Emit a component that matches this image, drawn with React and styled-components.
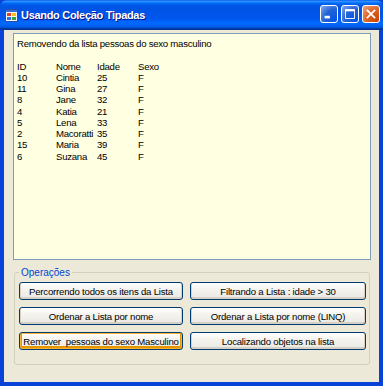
import React from "react";
import styled, { createGlobalStyle } from "styled-components";

const GlobalStyle = createGlobalStyle`
  html, body {
    margin: 0;
    padding: 0;
    background: #ffffff;
  }
  body {
    font-family: "Liberation Sans", Arial, sans-serif;
  }
`;

// pessoas que sobraram depois de remover o sexo masculino
const pessoas = [
  { id: 10, nome: "Cintia", idade: 25, sexo: "F" },
  { id: 11, nome: "Gina", idade: 27, sexo: "F" },
  { id: 8, nome: "Jane", idade: 32, sexo: "F" },
  { id: 4, nome: "Katia", idade: 21, sexo: "F" },
  { id: 5, nome: "Lena", idade: 33, sexo: "F" },
  { id: 2, nome: "Macoratti", idade: 35, sexo: "F" },
  { id: 15, nome: "Maria", idade: 39, sexo: "F" },
  { id: 6, nome: "Suzana", idade: 45, sexo: "F" },
];

const botoes = [
  ["Percorrendo todos os itens da Lista", "Filtrando a Lista : idade > 30"],
  ["Ordenar a Lista por nome", "Ordenar a Lista por nome (LINQ)"],
  ["Remover  pessoas do sexo Masculino", "Localizando objetos na lista"],
];

const FormIcon = () => (
  <svg width="13" height="13" viewBox="0 0 13 13">
    <rect x="0.5" y="0.5" width="12" height="12" fill="#f4f4f4" stroke="#2a4ea8" />
    <rect x="1" y="1" width="11" height="2" fill="#3a6cd8" />
    <rect x="2" y="4" width="4" height="3" fill="#e04030" />
    <rect x="7" y="4" width="4" height="3" fill="#f0c020" />
    <rect x="2" y="8" width="4" height="3" fill="#3070e0" />
    <rect x="7" y="8" width="4" height="3" fill="#40a040" />
  </svg>
);

const App = () => {
  return (
    <>
      <GlobalStyle />
      <Window>
        <TitleBar>
          <FormIcon />
          <Title>Usando Coleção Tipadas</Title>
          <Controls>
            <CaptionButton>
              <svg width="18" height="18" viewBox="0 0 18 18">
                <rect x="4" y="11" width="6" height="3" fill="#fff" />
              </svg>
            </CaptionButton>
            <CaptionButton>
              <svg width="18" height="18" viewBox="0 0 18 18">
                <rect x="4" y="4" width="10" height="10" fill="none" stroke="#fff" strokeWidth="1" />
                <rect x="4" y="4" width="10" height="2" fill="#fff" />
              </svg>
            </CaptionButton>
            <CaptionButton close>
              <svg width="18" height="18" viewBox="0 0 18 18">
                <path d="M5 5 L13 13 M13 5 L5 13" stroke="#fff" strokeWidth="2" strokeLinecap="square" />
              </svg>
            </CaptionButton>
          </Controls>
        </TitleBar>
        <Client>
          <OutputBox>
            <Line>Removendo da lista pessoas do sexo masculino</Line>
            <Line>&nbsp;</Line>
            <Row>
              <Cell>ID</Cell>
              <Cell>Nome</Cell>
              <Cell>Idade</Cell>
              <Cell>Sexo</Cell>
            </Row>
            {pessoas.map((p) => (
              <Row key={p.id}>
                <Cell>{p.id}</Cell>
                <Cell>{p.nome}</Cell>
                <Cell>{p.idade}</Cell>
                <Cell>{p.sexo}</Cell>
              </Row>
            ))}
          </OutputBox>
          <Group>
            <Legend>Operações</Legend>
            <ButtonGrid>
              {botoes.map(([esquerda, direita], i) => (
                <React.Fragment key={i}>
                  <XPButton $focused={i === 2}>{esquerda}</XPButton>
                  <XPButton>{direita}</XPButton>
                </React.Fragment>
              ))}
            </ButtonGrid>
          </Group>
        </Client>
      </Window>
    </>
  );
};

const Window = styled.div`
  width: 383px;
  height: 386px;
  display: flex;
  flex-direction: column;
  background: #0842d8;
  box-sizing: border-box;
  overflow: hidden;
`;

const TitleBar = styled.div`
  height: 30px;
  flex: none;
  display: flex;
  align-items: center;
  padding: 0 3px 0 5px;
  box-sizing: border-box;
  border-radius: 7px 7px 0 0;
  background: linear-gradient(
    to bottom,
    #0058ee 0%,
    #3593ff 4%,
    #288eff 6%,
    #127dff 8%,
    #036ffc 10%,
    #0262ee 14%,
    #0057e5 20%,
    #0054e3 24%,
    #0055eb 56%,
    #005bf5 66%,
    #026afe 76%,
    #0062ef 86%,
    #0052d6 92%,
    #0040ab 94%,
    #003092 100%
  );
`;

const Title = styled.div`
  flex: 1;
  margin-left: 3px;
  margin-top: -1px;
  color: #ffffff;
  font-family: "Liberation Sans", Arial, sans-serif;
  font-weight: bold;
  font-size: 11px;
  letter-spacing: -0.3px;
  text-shadow: 1px 1px #0f1089;
`;

const Controls = styled.div`
  display: flex;
  gap: 3px;
  align-self: flex-start;
  margin-top: 5px;
`;

const CaptionButton = styled.div`
  width: 18px;
  height: 18px;
  box-sizing: border-box;
  border: 1px solid #ffffff;
  border-radius: 3px;
  display: flex;
  align-items: center;
  justify-content: center;
  overflow: hidden;
  background: ${(props) =>
    props.close
      ? "radial-gradient(circle at 90% 90%, #cc4600 0%, #dc6527 55%, #f0a58a 100%)"
      : "radial-gradient(circle at 90% 90%, #0054e9 0%, #2263d5 55%, #88a9ef 100%)"};
`;

const Client = styled.div`
  flex: 1;
  margin: 0 4px 4px 4px;
  background: #ece9d8;
  display: flex;
  flex-direction: column;
  padding: 3px 8px 0 9px;
`;

const OutputBox = styled.div`
  height: 227px;
  box-sizing: border-box;
  border: 1px solid #7f9db9;
  background: #ffffe1;
  padding: 4px 3px;
  font-size: 9.6px;
  letter-spacing: -0.25px;
  color: #000000;
  line-height: 11.25px;
`;

const Line = styled.div`
  white-space: pre;
`;

const Row = styled.div`
  display: grid;
  grid-template-columns: 39px 41px 41px 41px;
`;

const Cell = styled.span`
  white-space: nowrap;
`;

const Group = styled.fieldset`
  margin: 7px 1px 0 1px;
  padding: 4px 4px 4px 4px;
  border: 1px solid #d0d0bf;
  border-radius: 3px;
  min-width: 0;
`;

const Legend = styled.legend`
  color: #0046d5;
  font-size: 10px;
  padding: 0 2px;
  margin-left: 0;
`;

const ButtonGrid = styled.div`
  display: grid;
  grid-template-columns: 164px 176px;
  column-gap: 7px;
  row-gap: 7px;
  padding-bottom: 10px;
`;

const XPButton = styled.button`
  height: 18px;
  box-sizing: border-box;
  padding: 0;
  font-family: "Liberation Sans", Arial, sans-serif;
  font-size: 9.6px;
  letter-spacing: -0.2px;
  color: #000000;
  border: 1px solid #003c74;
  border-radius: 3px;
  background: linear-gradient(to bottom, #ffffff 0%, #f4f3ee 40%, #ecebe6 85%, #d6d0c5 100%);
  box-shadow: ${(props) =>
    props.$focused
      ? "inset 0 0 0 1px #f8b330, inset 0 -1px 0 2px #e59700"
      : "inset 0 -1px 0 1px #d6d0c5"};
  white-space: pre;
`;

export default App;
